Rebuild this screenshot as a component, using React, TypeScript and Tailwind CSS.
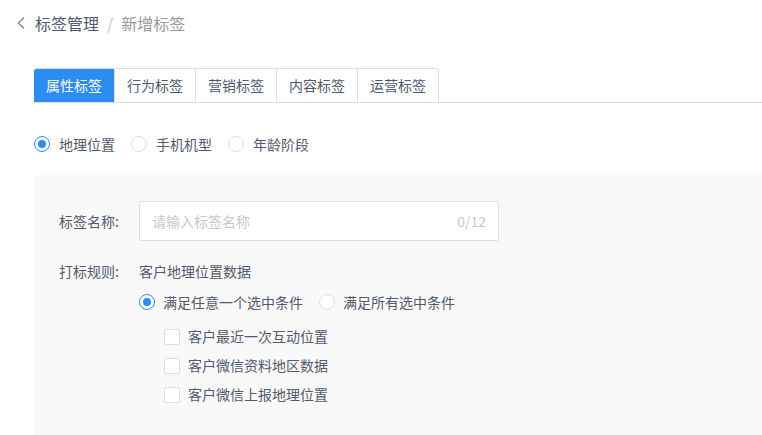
import React from 'react';

const Radio: React.FC<{ checked?: boolean; label: string; gap?: string }> = ({ checked, label, gap = 'gap-[8px]' }) => (
  <label className={`flex items-center ${gap}`}>
    <span
      className={`w-[16px] h-[16px] rounded-full border bg-white flex items-center justify-center ${
        checked ? 'border-[#2d8cf0]' : 'border-[#dcdee2]'
      }`}
    >
      {checked && <span className="w-[8px] h-[8px] rounded-full bg-[#2d8cf0]" />}
    </span>
    <span>{label}</span>
  </label>
);

const Checkbox: React.FC<{ label: string }> = ({ label }) => (
  <label className="flex items-center gap-[8px] h-[29px]">
    <span className="w-[16px] h-[16px] rounded-[2px] border border-[#dcdee2] bg-white" />
    <span>{label}</span>
  </label>
);

const tabs = ['属性标签', '行为标签', '营销标签', '内容标签', '运营标签'];

export default function App() {
  return (
    <div
      className="w-[762px] h-[435px] overflow-hidden bg-white text-[14px] text-[#515a6e]"
      style={{ fontFamily: '"Noto Sans CJK SC", "Noto Sans", sans-serif' }}
    >
      {/* breadcrumb */}
      <div className="flex items-center h-[22px] mt-[12px] pl-[16px] text-[16px]">
        <svg width="10" height="14" viewBox="0 0 10 14" className="mr-[9px]">
          <path d="M8 1.5 2.5 7 8 12.5" fill="none" stroke="#808695" strokeWidth="1.4" />
        </svg>
        <span className="text-[#515a6e]">标签管理</span>
        <span className="mx-[8px] text-[#c5c8ce]">/</span>
        <span className="text-[#999]">新增标签</span>
      </div>

      {/* tabs */}
      <div className="ml-[34px] mt-[34px] flex border-b border-[#dcdee2] h-[35px]">
        {tabs.map((t, i) => (
          <div
            key={t}
            className={`w-[81px] flex items-center justify-center border-t border-r border-[#dcdee2] ${
              i === 0 ? 'bg-[#2d8cf0] text-white border-[#2d8cf0] rounded-tl-[3px]' : 'bg-white'
            } ${i === tabs.length - 1 ? 'rounded-tr-[4px]' : ''}`}
          >
            {t}
          </div>
        ))}
      </div>

      {/* type radios */}
      <div className="ml-[34px] mt-[30px] flex items-center h-[22px] gap-[16px]">
        <Radio checked label="地理位置" gap="gap-[9px]" />
        <Radio label="手机机型" gap="gap-[9px]" />
        <Radio label="年龄阶段" gap="gap-[9px]" />
      </div>

      {/* form panel */}
      <div className="ml-[34px] mt-[20px] bg-[#f9f9f9] pt-[26px] pl-[25px] pb-[40px]">
        <div className="flex items-center h-[40px]">
          <div className="w-[80px]">标签名称:</div>
          <div className="w-[360px] h-[40px] bg-white border border-[#dcdee2] rounded-[2px] flex items-center justify-between px-[12px]">
            <span className="text-[#c5c8ce]">请输入标签名称</span>
            <span className="text-[#c5c8ce]">0/12</span>
          </div>
        </div>
        <div className="flex items-center h-[22px] mt-[19px]">
          <div className="w-[80px]">打标规则:</div>
          <div>客户地理位置数据</div>
        </div>
        <div className="ml-[80px] mt-[9px] flex items-center h-[22px] gap-[16px]">
          <Radio checked label="满足任意一个选中条件" />
          <Radio label="满足所有选中条件" />
        </div>
        <div className="ml-[105px] mt-[9px] flex flex-col">
          <Checkbox label="客户最近一次互动位置" />
          <Checkbox label="客户微信资料地区数据" />
          <Checkbox label="客户微信上报地理位置" />
        </div>
      </div>
    </div>
  );
}
